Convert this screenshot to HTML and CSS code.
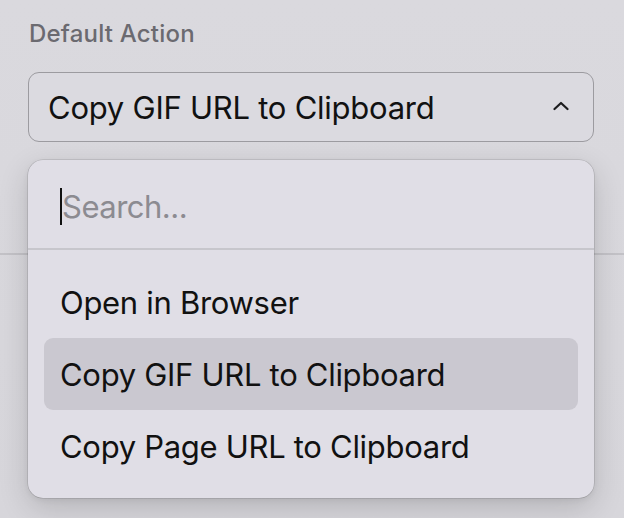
FILE: index.html
```html
<!DOCTYPE html>
<html lang="en">
<head>
<meta charset="utf-8">
<title>Default Action</title>
<link rel="stylesheet" href="styles.css">
</head>
<body>
<div class="section">
  <div class="label">Default Action</div>
  <div class="field">
    <div class="select">
      <span class="value">Copy GIF URL to Clipboard</span>
      <svg class="chevron" width="16" height="10" viewBox="0 0 16 10"><path d="M1.5 8 L8 2 L14.5 8" fill="none" stroke="#1c1c1e" stroke-width="2.2" stroke-linecap="round" stroke-linejoin="round"/></svg>
    </div>
    <div class="popup">
      <div class="search"><span class="caret"></span><span class="placeholder">Search...</span></div>
      <ul class="list">
        <li class="item">Open in Browser</li>
        <li class="item selected">Copy GIF URL to Clipboard</li>
        <li class="item">Copy Page URL to Clipboard</li>
      </ul>
    </div>
  </div>
</div>
<div class="divider"></div>
</body>
</html>
```
FILE: styles.css
```css
html, body {
  margin: 0;
  padding: 0;
}
body {
  width: 624px;
  height: 518px;
  overflow: hidden;
  background: linear-gradient(180deg, #dad9de 0%, #d7d6db 100%);
  font-family: Inter, "Noto Sans", sans-serif;
  color: #111;
}
.section {
  padding: 22px 30px 0 28px;
  height: 232px;
  box-sizing: border-box;
}
.label {
  font-size: 24px;
  font-weight: 500;
  color: #6b6a70;
  height: 24px;
  line-height: 24px;
  padding-left: 1px;
  letter-spacing: 0.2px;
}
.field {
  position: relative;
  margin-top: 26px;
}
.select {
  height: 70px;
  box-sizing: border-box;
  border: 1.5px solid #9c9ba0;
  border-radius: 11px;
  background: #dbdae0;
  display: flex;
  align-items: center;
  justify-content: space-between;
  padding: 0 24px 0 19px;
}
.value {
  font-size: 31px;
  letter-spacing: -0.25px;
}
.chevron {
  display: block;
  margin-top: -2px;
}
.divider {
  height: 2px;
  background: #c3c2c7;
  margin-top: 21px;
}
.popup {
  position: absolute;
  left: 0;
  top: 88px;
  width: 566px;
  height: 338px;
  box-sizing: border-box;
  background: #e0dee6;
  border-radius: 15px;
  box-shadow: 0 0 0 0.5px rgba(0,0,0,0.18), 0 10px 30px rgba(0,0,0,0.16), 0 2px 6px rgba(0,0,0,0.06);
  display: flex;
  flex-direction: column;
}
.search {
  height: 90px;
  box-sizing: border-box;
  border-bottom: 2px solid #c7c6cc;
  display: flex;
  align-items: center;
  padding: 4px 0 0 32px;
}
.caret {
  width: 2px;
  height: 37px;
  background: #111;
}
.placeholder {
  font-size: 31px;
  color: #8c8b91;
  letter-spacing: -0.5px;
}
.list {
  list-style: none;
  margin: 0;
  padding: 16px 16px;
}
.item {
  height: 72px;
  display: flex;
  align-items: center;
  padding-left: 16px;
  font-size: 31px;
  letter-spacing: -0.3px;
  border-radius: 9px;
}
.item.selected {
  background: #cac8d0;
}
```
